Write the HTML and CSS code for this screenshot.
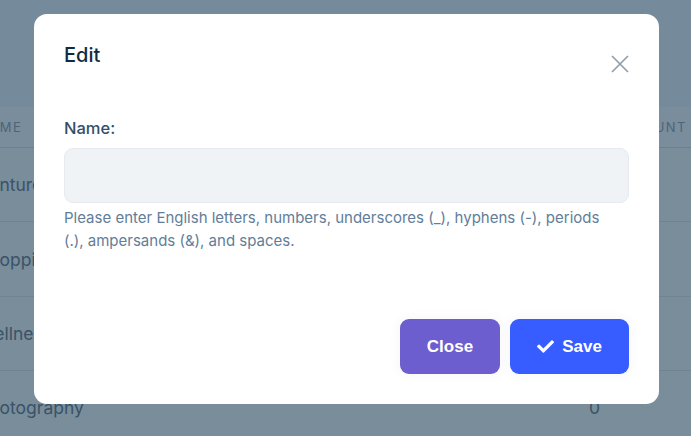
FILE: index.html
```html
<!DOCTYPE html>
<html>
<head>
<meta charset="utf-8">
<link rel="stylesheet" href="styles.css">
</head>
<body>
<div class="page">
  <div class="table">
    <div class="thead">
      <span class="th th-name">Name</span>
      <span class="th th-count">Count</span>
    </div>
    <div class="row"><span class="cell-name">Venture</span><span class="cell-num"></span></div>
    <div class="row"><span class="cell-name">Shopping</span><span class="cell-num"></span></div>
    <div class="row"><span class="cell-name">Wellness</span><span class="cell-num"></span></div>
    <div class="row"><span class="cell-name">Photography</span><span class="cell-num">0</span></div>
  </div>
</div>

<div class="modal">
  <div class="modal-head">
    <h2 class="title">Edit</h2>
    <button class="x-btn" aria-label="Close">
      <svg width="18" height="18" viewBox="0 0 18 18"><path d="M1 1 L17 17 M17 1 L1 17" stroke="#8c9ca8" stroke-width="1.6" fill="none"/></svg>
    </button>
  </div>
  <div class="modal-body">
    <label class="label">Name:</label>
    <div class="input"></div>
    <p class="help">Please enter English letters, numbers, underscores (_), hyphens (-), periods (.), ampersands (&amp;), and spaces.</p>
  </div>
  <div class="modal-foot">
    <button class="btn btn-close">Close</button>
    <button class="btn btn-save">
      <svg width="17" height="13" viewBox="0 64 512 384"><path fill="#fff" d="M173.898 439.404l-166.4-166.4c-9.997-9.997-9.997-26.206 0-36.204l36.203-36.204c9.997-9.998 26.207-9.998 36.204 0L192 312.69 432.095 72.596c9.997-9.997 26.207-9.997 36.204 0l36.203 36.204c9.997 9.997 9.997 26.206 0 36.204l-294.4 294.401c-9.998 9.997-26.207 9.997-36.204-.001z"/></svg>
      Save
    </button>
  </div>
</div>
</body>
</html>
```

FILE: styles.css
```css
html, body {
  margin: 0;
  padding: 0;
}
body {
  width: 691px;
  height: 436px;
  overflow: hidden;
  background: #758a9b;
  font-family: Inter, "Noto Sans", sans-serif;
}
.page {
  padding-top: 107px;
}
.table {
  margin-left: -22px;
  width: 713px;
}
.thead {
  height: 41px;
  background: #798d9d;
  border-bottom: 1px solid #6c8092;
  display: flex;
  align-items: center;
  justify-content: space-between;
  box-sizing: border-box;
}
.th {
  text-transform: uppercase;
  letter-spacing: 1.5px;
  font-size: 13px;
  color: #4e6477;
}
.th-count { margin-right: 4px; }
.row {
  height: 74px;
  background: #798d9b;
  border-bottom: 1px solid #6f8393;
  display: flex;
  align-items: center;
  box-sizing: border-box;
}
.row:nth-child(3) { height: 75px; }
.cell-name {
  font-size: 17.5px;
  color: #3b5267;
}
.cell-num {
  margin-left: auto;
  margin-right: 91px;
  font-size: 17.5px;
  color: #3b5267;
}

.modal {
  position: absolute;
  left: 34px;
  top: 14px;
  width: 625px;
  height: 390px;
  background: #fff;
  border-radius: 13px;
  box-sizing: border-box;
  padding: 0 30px;
  display: flex;
  flex-direction: column;
}
.modal-head {
  display: flex;
  justify-content: space-between;
  align-items: flex-start;
  padding-top: 29px;
}
.title {
  margin: 0;
  font-size: 20px;
  font-weight: 500;
  color: #102a43;
  line-height: 24px;
}
.x-btn {
  border: 0;
  background: none;
  padding: 0;
  margin-top: 12px;
  width: 18px;
  height: 18px;
  display: block;
}
.x-btn svg { display: block; }
.modal-body {
  padding-top: 45px;
}
.label {
  display: block;
  font-size: 16.5px;
  font-weight: 500;
  color: #334e68;
  line-height: 20px;
}
.input {
  margin-top: 10px;
  height: 55px;
  background: #f0f3f6;
  border: 1px solid #e6eaee;
  border-radius: 9px;
  box-sizing: border-box;
}
.help {
  margin: 3px 0 0;
  padding-right: 16px;
  font-size: 15px;
  line-height: 23px;
  color: #627d98;
}
.modal-foot {
  margin-top: auto;
  margin-bottom: 30px;
  display: flex;
  justify-content: flex-end;
  gap: 10px;
}
.btn {
  height: 55px;
  border: 0;
  border-radius: 9px;
  color: #fff;
  font-family: "Liberation Sans", Arial, sans-serif;
  font-weight: 700;
  font-size: 17px;
  display: flex;
  align-items: center;
  justify-content: center;
  gap: 8px;
  box-shadow: 0 0 10px 4px rgba(30, 50, 80, 0.025);
}
.btn-close {
  width: 100px;
  background: #6c5ecf;
}
.btn-save {
  width: 119px;
  background: #375cff;
}
.btn svg { display: block; }
```
